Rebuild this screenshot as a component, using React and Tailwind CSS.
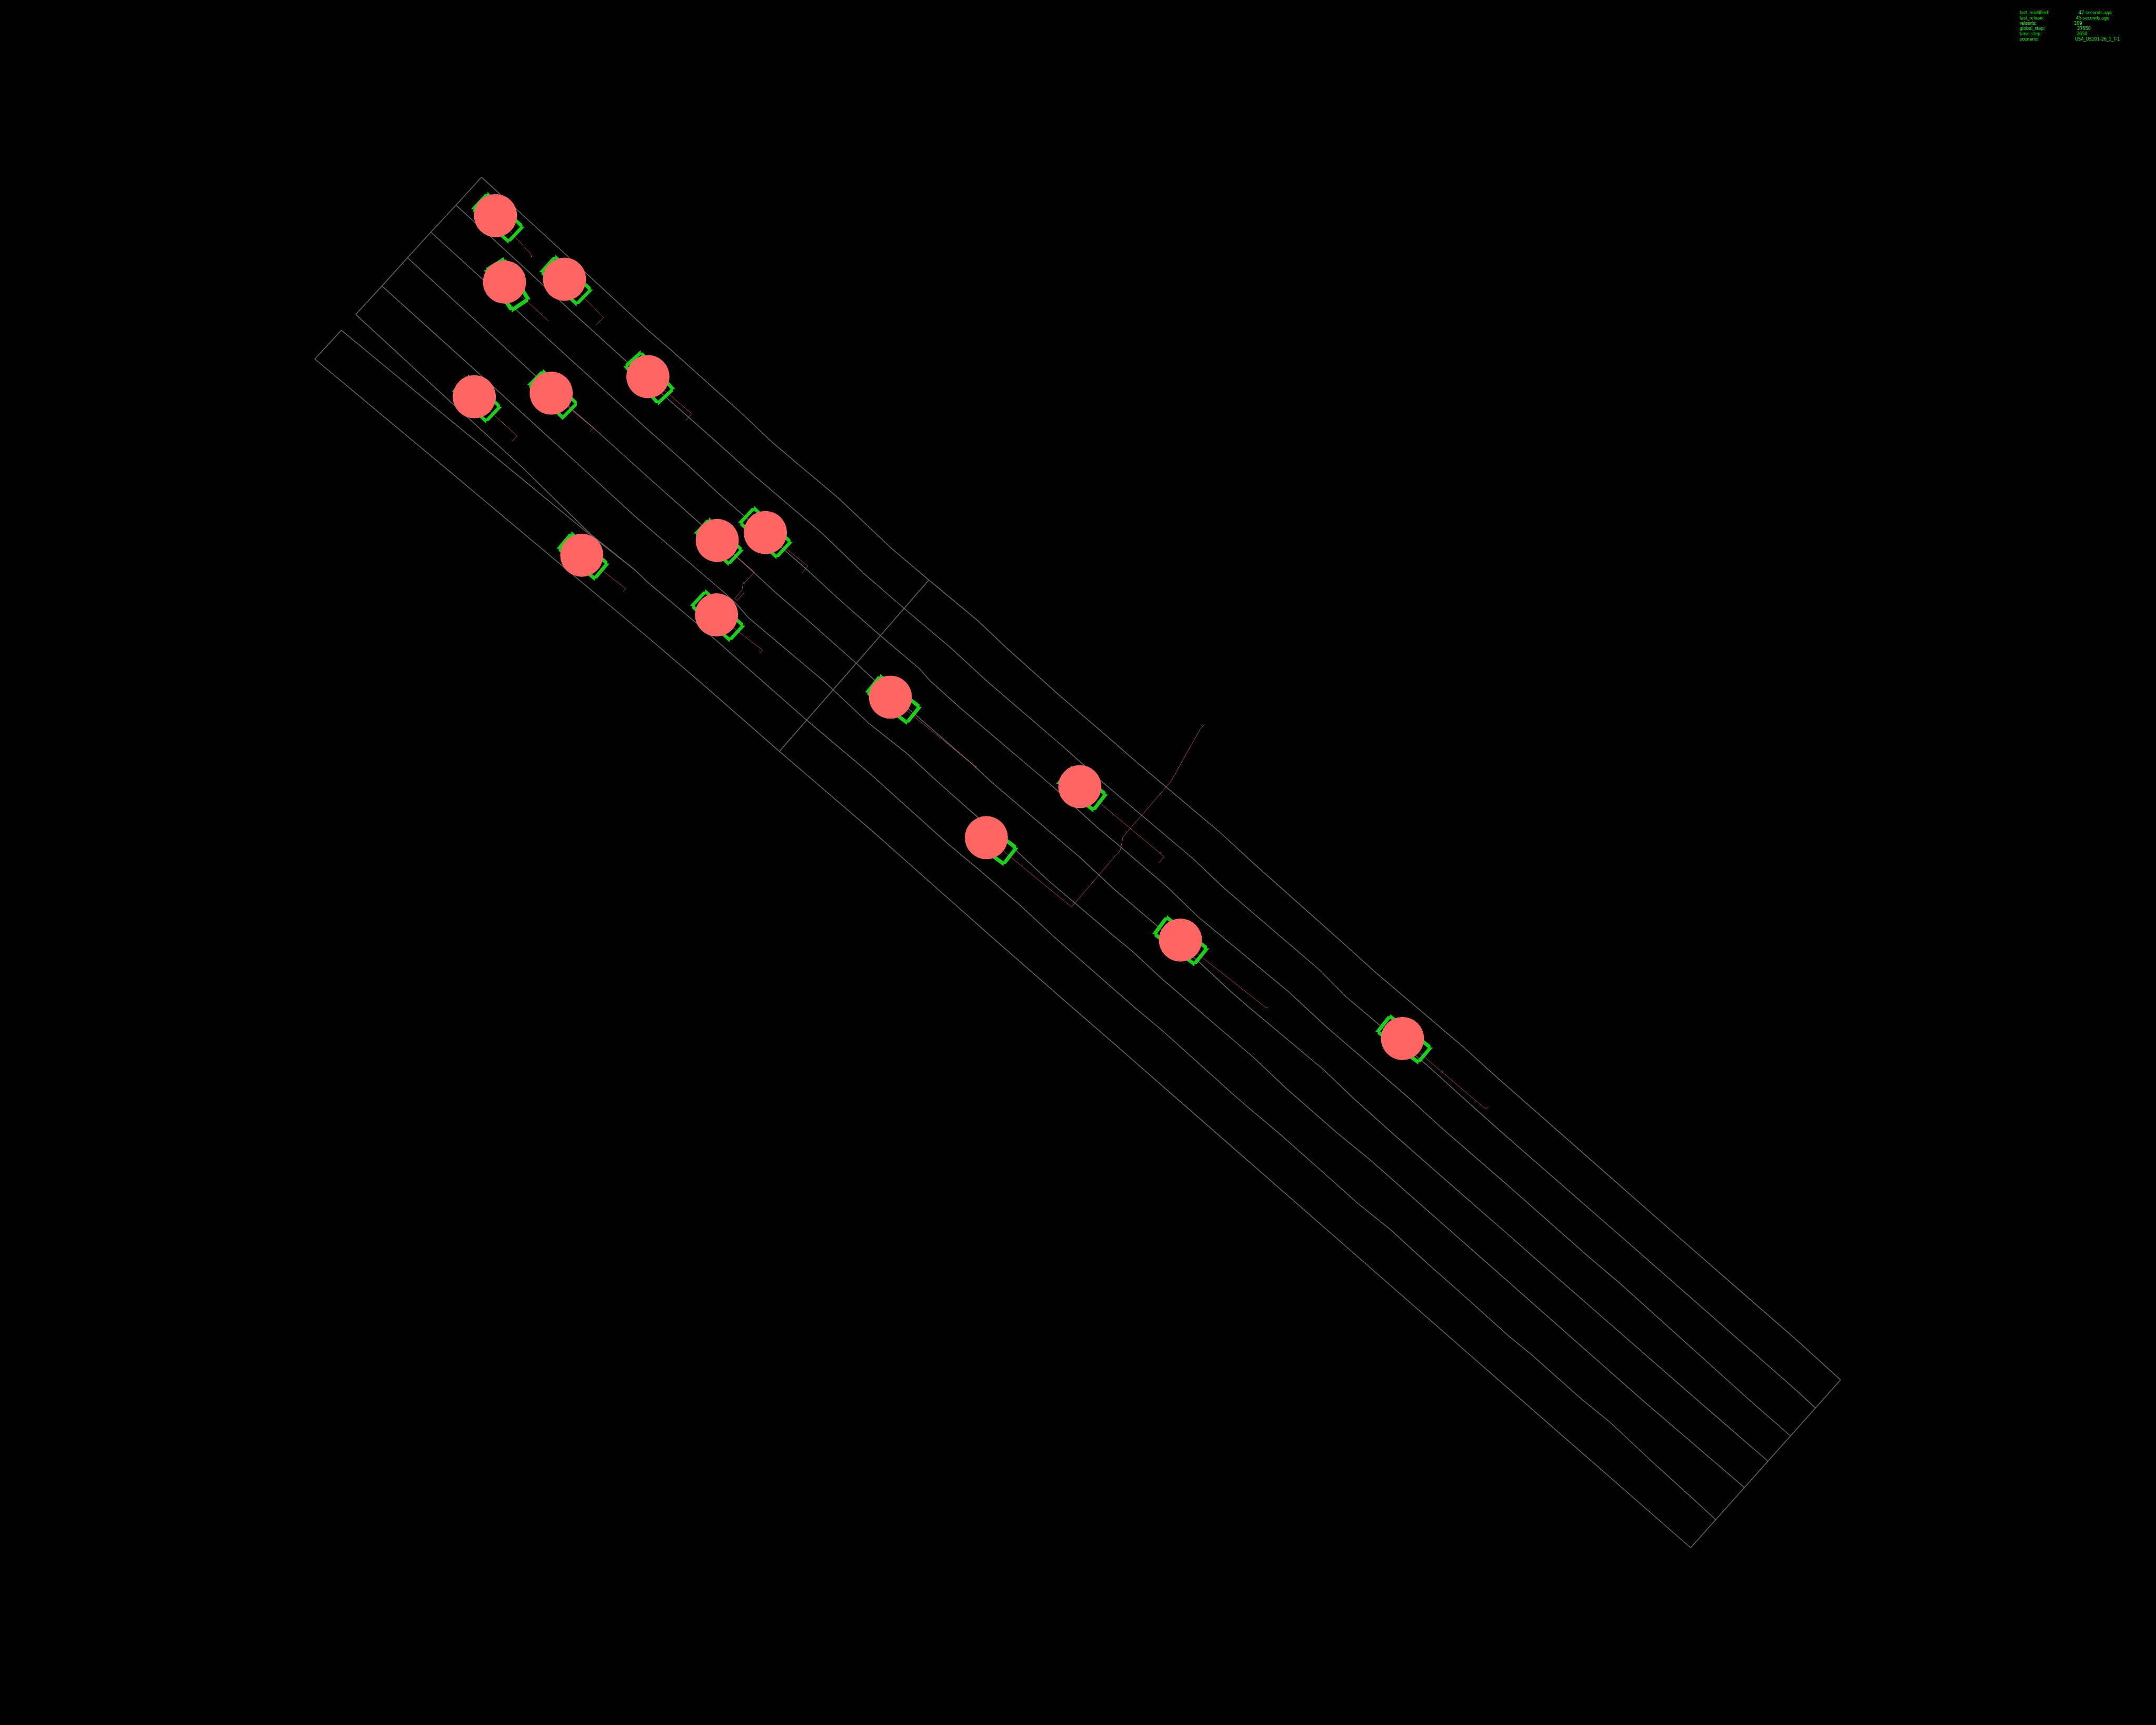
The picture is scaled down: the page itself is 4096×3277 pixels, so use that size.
const LANE_LINES = [
  // lane boundaries, from the upper right edge of the road to the lower left one
  "1340,493 1583,716 1800,916 1864,971 2065,1151 2148,1230 2333,1386 2481,1526 2585,1614 2722,1728 2798,1800 2946,1933 3097,2063 3161,2119 3396,2317 3489,2403 3734,2621 3827,2705 4072,2913 4158,2991 4649,3423 5000,3729 5122,3840",
  "1269,571 1366,659 1511,793 1583,860 1747,1009 1855,1107 1991,1227 2074,1302 2291,1487 2403,1595 2516,1693 2645,1802 2746,1895 2960,2079 3016,2129 3065,2174 3322,2391 3406,2471 3672,2699 3745,2773 3841,2854 3958,2953 3999,2989 4084,3066 4178,3150 4579,3500 5000,3870 5052,3918",
  "1199,646 1344,778 1436,862 1583,996 1800,1193 1915,1295 2007,1380 2071,1436 2186,1533 2240,1580 2342,1674 2449,1768 2559,1861 2588,1894 2669,1967 2915,2176 2946,2203 2995,2249 3052,2301 3100,2341 3247,2467 3334,2551 3584,2758 3664,2832 3692,2858 3926,3060 4011,3138 4200,3302 4424,3500 4508,3571 4873,3900 4982,3995",
  "1134,717 1491,1046 1594,1141 1653,1192 1800,1325 1953,1461 2046,1546 2100,1595 2164,1654 2247,1725 2382,1845 2433,1892 2550,1991 2596,2031 2659,2086 2710,2130 2760,2177 3009,2389 3100,2474 3223,2579 3338,2678 3426,2760 3472,2800 3685,2978 3763,3053 3871,3150 4011,3273 4200,3438 4270,3500 4728,3900 4920,4066",
  "1063,796 1339,1045 1376,1079 1618,1300 1762,1432 1800,1465 2011,1645 2046,1677 2084,1720 2298,1900 2350,1949 2418,2013 2523,2096 2610,2176 2722,2275 2828,2367 2917,2450 3100,2605 3152,2648 3236,2726 3490,2944 3580,3029 3718,3150 3812,3227 4200,3569 4575,3900 4854,4139",
  "990,875 1234,1100 1453,1300 1644,1487 1768,1587 1800,1618 1944,1739 2127,1900 2245,2004 2419,2151 2639,2349 2722,2418 2840,2520 2929,2603 3100,2753 3156,2802 3237,2870 3447,3059 3563,3157 3684,3264 3779,3349 3870,3422 3978,3521 4061,3594 4200,3719 4261,3769 4401,3893 4481,3958 4595,4065 4704,4164 4775,4229",
  "876,999 997,1100 1237,1300 1571,1580 1800,1771 1951,1900 2169,2091 2429,2314 2747,2596 2980,2800 3100,2904 4200,3866 4705,4307",
  "950,919 1169,1100 1413,1300 1638,1485 1768,1587",
  // borders across the road
  "990,875 1063,796 1134,717 1199,646 1269,571 1340,493",
  "876,999 950,919",
  "2585,1614 2169,2091",
  "5122,3840 4705,4307",
];

// box: corners of the vehicle's outline; routes: its predicted path
const VEHICLES = [
  { center: [1379, 600], box: [[1356, 540], [1454, 631], [1415, 672], [1317, 582]], routes: ["1420,645 1476,705 1479,714 1478,717", "1479,715 1482,711"] },
  { center: [1571, 777], box: [[1545, 715], [1644, 806], [1605, 846], [1507, 757]], routes: ["1614,820 1618,822 1680,883 1659,905"] },
  { center: [1404, 785], box: [[1402, 722], [1470, 833], [1424, 863], [1353, 752]], routes: ["1450,824 1525,892"] },
  { center: [1803, 1048], box: [[1783, 981], [1873, 1083], [1831, 1122], [1741, 1019]], routes: ["1850,1087 1925,1151 1907,1172"] },
  { center: [1534, 1094], box: [[1511, 1033], [1605, 1123], [1566, 1162], [1473, 1072]], routes: ["1580,1133 1652,1191 1641,1202"] },
  { center: [1320, 1104], box: [[1302, 1048], [1391, 1132], [1353, 1172], [1264, 1090]], routes: ["1364,1145 1439,1213 1425,1228"] },
  { center: [1619, 1545], box: [[1590, 1485], [1690, 1568], [1655, 1610], [1555, 1527]], routes: ["1668,1581 1741,1638 1734,1646"] },
  { center: [1996, 1504], box: [[1973, 1446], [2064, 1530], [2028, 1569], [1937, 1485]], routes: ["2041,1542 2100,1592 2068,1625 2065,1642 2045,1665 2051,1671 2071,1649"] },
  { center: [2130, 1482], box: [[2098, 1414], [2200, 1508], [2161, 1550], [2060, 1455]], routes: ["2178,1519 2248,1575 2232,1595"] },
  { center: [1994, 1711], box: [[1963, 1646], [2068, 1741], [2031, 1781], [1926, 1686]], routes: ["2041,1747 2122,1809 2115,1817"] },
  { center: [2478, 1940], box: [[2449, 1882], [2559, 1967], [2524, 2011], [2414, 1927]], routes: ["2524,1978 2716,2134 2718,2133", "2717,2133 2715,2136"] },
  { center: [3005, 2189], box: [[2980, 2137], [3077, 2210], [3043, 2254], [2946, 2181]], routes: ["3052,2227 3240,2384 3224,2402"] },
  { center: [2745, 2331], box: [[2727, 2285], [2828, 2359], [2793, 2404], [2692, 2330]], routes: ["2793,2369 2982,2524 3118,2365 3125,2329 3259,2174 3340,2029 3352,2016"] },
  { center: [3285, 2616], box: [[3247, 2553], [3359, 2639], [3324, 2683], [3213, 2599]], routes: ["3329,2651 3524,2805 3529,2801"] },
  { center: [3903, 2890], box: [[3868, 2828], [3981, 2915], [3947, 2956], [3834, 2871]], routes: ["3948,2928 4119,3073 4124,3078 4136,3086 4142,3079"] },
];

const STATUS = [
  ["last_modified:", "47 seconds ago"],
  ["last_reload:", "45 seconds ago"],
  ["reloads:", "109"],
  ["global_step:", "27650"],
  ["time_step:", "2650"],
  ["scenario:", "USA_US101-26_1_T-1"],
];

// A wide line whose ends are cut along the axis it crosses, not at right angles to it.
function slab([x1, y1], [x2, y2]) {
  const half = 6.5;
  const flat = Math.abs(x2 - x1) >= Math.abs(y2 - y1);
  const dx = flat ? 0 : half;
  const dy = flat ? half : 0;
  return `M${x1 - dx},${y1 - dy}L${x2 - dx},${y2 - dy}L${x2 + dx},${y2 + dy}L${x1 + dx},${y1 + dy}Z`;
}

function Vehicle({ center, box, routes }) {
  return (
    <g>
      {box.map((corner, i) => (
        <path key={i} d={slab(corner, box[(i + 1) % box.length])} className="fill-[#18d018]" />
      ))}
      <circle cx={center[0]} cy={center[1]} r="60" className="fill-[#ff6663]" />
      {routes.map((points) => (
        <polyline key={points} points={points} className="fill-none stroke-[#ff6663] stroke-1" />
      ))}
    </g>
  );
}

function RoadMap() {
  return (
    <svg viewBox="0 0 6000 4800" className="block w-full" role="img" aria-label="Traffic scenario">
      {LANE_LINES.map((points) => (
        <polyline key={points} points={points} className="fill-none stroke-[#666666] stroke-[2.3]" />
      ))}
      {VEHICLES.map((vehicle) => (
        <Vehicle key={vehicle.center.join()} {...vehicle} />
      ))}
    </svg>
  );
}

function StatusOverlay() {
  return (
    <dl className="absolute top-5 right-0 flex h-[58px] w-[259px] flex-col justify-between font-['DejaVu_Sans',sans-serif] text-[8px] leading-[10px] text-[#00ff00]">
      {STATUS.map(([label, value]) => (
        <div key={label} className="flex">
          <dt className="whitespace-pre">{label.padEnd(36)}</dt>
          <dd>{value}</dd>
        </div>
      ))}
    </dl>
  );
}

export default function App() {
  return (
    <main className="relative min-h-screen overflow-hidden bg-black">
      <RoadMap />
      <StatusOverlay />
    </main>
  );
}
